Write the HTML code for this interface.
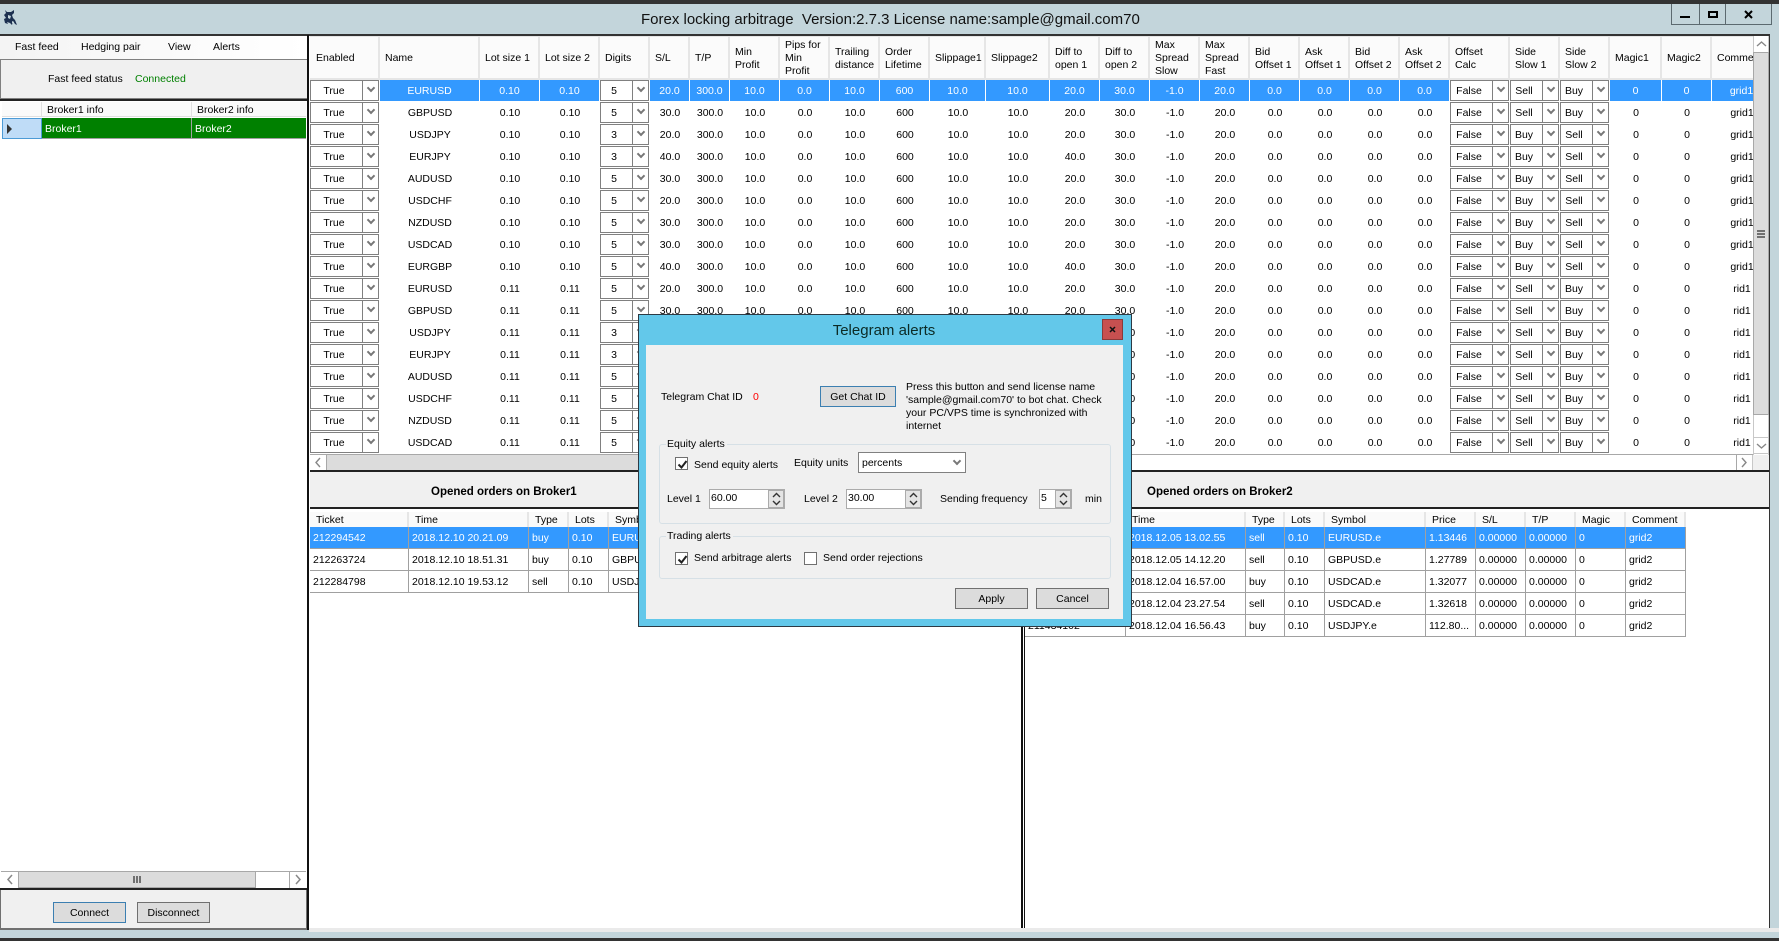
<!DOCTYPE html>
<html><head><meta charset="utf-8"><title>Forex locking arbitrage</title>
<style>
html,body{margin:0;padding:0;width:1779px;height:941px;overflow:hidden;background:#c3d5db}
body{position:relative;font:10.5px/14px "Liberation Sans",sans-serif;color:#000}
div,span,i,b{box-sizing:border-box}
.a{position:absolute}
.t{position:absolute;white-space:pre;line-height:14px}
table{border-collapse:separate;border-spacing:0;table-layout:fixed;position:absolute;left:0;top:0}
td{padding:0;overflow:hidden;white-space:nowrap}
#m{position:absolute;left:310px;top:36px;width:1443px;height:419px;overflow:hidden;background:#fff;border-top:1px solid #e6e6e6}
#m table{width:1462px}
#m tr{height:22px}
#m td{text-align:center;vertical-align:middle;height:22px;box-sizing:border-box}
#m tr.h td{height:42px;background:#fbfbfb;text-align:left;line-height:13px;padding:2px 0 0 5px;border-right:2px solid #e6e6e6;border-bottom:2px solid #e6e6e6}
#m tr.h td:first-child{padding-left:6px}
#m tr.sel td{background:#3399ff;color:#fff;border-right:1px solid #fff;border-bottom:1px solid #fff}
#m td.c,#m tr.sel td.c{padding:0;background:#fff;border:0;color:#000;vertical-align:top}
i{font-style:normal;display:block;position:relative;height:21px;margin-right:1px;border:1px solid #808080;line-height:20px;text-align:center;padding-right:21px;background:#fff}
i::before{content:"";position:absolute;right:15px;top:0;bottom:0;width:1px;background:#808080}
i::after,.dd::after{content:"";position:absolute;box-sizing:border-box;right:4px;top:4px;width:6px;height:6px;border-right:2px solid #777;border-bottom:2px solid #777;transform:rotate(45deg)}
.dd::after{right:5px;top:5px}
.o{position:absolute;background:#fff}
.o tr{height:22px}
.o td{height:22px;box-sizing:border-box;border-right:1px solid #a0a0a0;border-bottom:1px solid #a0a0a0;padding-left:3px;vertical-align:middle}
.o tr.h{height:15px}
.o tr.h td{height:15px;background:#fafafa;border:0;border-right:2px solid #e6e6e6;padding-left:6px;line-height:14px}
.o tr.sel td{background:#3399ff;color:#fff}
.btn{position:absolute;height:21px;background:#dcdcdc;border:1px solid #707070;text-align:center;line-height:20px}
.blue{border-color:#3c7fb1}
.cb{position:absolute;width:13px;height:13px;background:#fff;border:1px solid #707070}
.cb svg{position:absolute;left:1px;top:1px}
.sp{position:absolute;height:20px;background:#fff;border:1px solid #ababab}
.sp b{position:absolute;right:0;top:0;bottom:0;width:16px;background:#ababab}
.sp b span{position:absolute;left:1px;right:1px;height:8px;background:#e4e4e4}
.sp b span svg{position:absolute;left:3px;top:1px}
.g{position:absolute;border:1px solid #d6e0e6;border-radius:3px}
.l{position:absolute;background:#f0f0f0;white-space:nowrap;line-height:14px;padding:0 2px 0 1px}
.sb{position:absolute;background:#fff;border:1px solid #a8a8a8}
</style></head><body>

<!-- window frame -->
<div class="a" style="left:0;top:0;width:1779px;height:4px;background:#333"></div>
<div class="a" style="left:0;top:938px;width:1779px;height:3px;background:#333"></div>
<div class="a" style="left:0;top:34px;width:1770px;height:2px;background:#333"></div>
<svg class="a" style="left:0;top:4px" width="24" height="30" viewBox="0 4 24 30"><path d="M5 10l2 2h4l3-2v3l-2 2 1 3 2 2 2 5-2-1-2-3-1 4-2-2-3-1 1 2-3-1-1-4 2-1-2-3 2-2z" fill="#1c3050"/><path d="M8 15l3 1-1 3-2-1zM12 21l2 1 0 2-2-1z" fill="#c3d5db"/></svg>
<div class="t" id="title" style="left:641px;top:11px;font-size:15px;line-height:17px;width:488px;text-align:center;color:#111">Forex locking arbitrage  Version:2.7.3 License name:sample@gmail.com70</div>
<div class="a" style="left:1671px;top:4px;width:101px;height:21px;border:1px solid #5c6a70;border-top:0"></div>
<div class="a" style="left:1699px;top:4px;width:1px;height:20px;background:#5c6a70"></div>
<div class="a" style="left:1725px;top:4px;width:1px;height:20px;background:#5c6a70"></div>
<div class="a" style="left:1680px;top:16px;width:10px;height:2px;background:#000"></div>
<div class="a" style="left:1708px;top:11px;width:10px;height:7px;border:2px solid #000"></div>
<svg class="a" style="left:1744px;top:10px" width="10" height="9"><path d="M1 1l7 7M8 1l-7 7" stroke="#000" stroke-width="2" fill="none"/></svg>

<!-- left panel -->
<div class="a" style="left:0;top:36px;width:308px;height:894px;background:#fff"></div>
<div class="a" style="left:0;top:36px;width:307px;height:23px;background:linear-gradient(90deg,#f4f4f4,#fbfbfb 60%,#fff)"></div>
<div class="t" style="left:15px;top:40px">Fast feed</div>
<div class="t" style="left:81px;top:40px">Hedging pair</div>
<div class="t" style="left:168px;top:40px">View</div>
<div class="t" style="left:213px;top:40px">Alerts</div>
<div class="a" style="left:0;top:59px;width:307px;height:40px;background:#f0f0f0;border:1px solid #808080;border-right:0"></div>
<div class="t" style="left:48px;top:72px">Fast feed status</div>
<div class="t" style="left:135px;top:72px;color:#008000">Connected</div>
<div class="a" style="left:0;top:99px;width:307px;height:2px;background:#222"></div>
<div class="a" style="left:2px;top:102px;width:304px;height:15px;background:#fafafa;border-bottom:1px solid #e0e0e0"></div>
<div class="a" style="left:41px;top:102px;width:1px;height:15px;background:#e0e0e0"></div>
<div class="a" style="left:191px;top:102px;width:1px;height:15px;background:#e0e0e0"></div>
<div class="t" style="left:47px;top:103px">Broker1 info</div>
<div class="t" style="left:197px;top:103px">Broker2 info</div>
<div class="a" style="left:2px;top:118px;width:40px;height:21px;background:#bfdcf7;border:1px solid #4c9bd6"></div>
<svg class="a" style="left:7px;top:124px" width="6" height="10"><path d="M0 0l5 5-5 5z" fill="#333"/></svg>
<div class="a" style="left:42px;top:118px;width:264px;height:21px;background:#008000;border-bottom:1px solid #a0a0a0"></div>
<div class="a" style="left:191px;top:118px;width:1px;height:21px;background:#a0a0a0"></div>
<div class="t" style="left:45px;top:122px;color:#fff">Broker1</div>
<div class="t" style="left:195px;top:122px;color:#fff">Broker2</div>
<!-- left scrollbar -->
<div class="a" style="left:1px;top:871px;width:305px;height:17px;background:#fff;border-top:1px solid #a8a8a8"></div>
<div class="a" style="left:18px;top:871px;width:238px;height:17px;background:#dcdcdc;border:1px solid #a8a8a8"></div>
<div class="a" style="left:289px;top:871px;width:1px;height:17px;background:#a8a8a8"></div>
<div class="a" style="left:18px;top:871px;width:1px;height:17px;background:#a8a8a8"></div>
<svg class="a" style="left:6px;top:874px" width="8" height="11"><path d="M6 1L2 5.5 6 10" stroke="#888" stroke-width="1.5" fill="none"/></svg>
<svg class="a" style="left:294px;top:874px" width="8" height="11"><path d="M2 1l4 4.5L2 10" stroke="#888" stroke-width="1.5" fill="none"/></svg>
<div class="a" style="left:133px;top:876px;width:8px;height:7px;background:repeating-linear-gradient(90deg,#707070 0 2px,#dcdcdc 2px 3px)"></div>
<div class="a" style="left:0;top:888px;width:307px;height:2px;background:#222"></div>
<div class="a" style="left:0;top:890px;width:307px;height:40px;background:#f0f0f0;border:1px solid #707070;border-top:0;border-width:0 1px 2px 1px"></div>
<div class="btn blue" style="left:53px;top:902px;width:73px">Connect</div>
<div class="btn" style="left:137px;top:902px;width:73px">Disconnect</div>

<!-- right area -->
<div class="a" style="left:310px;top:36px;width:1460px;height:892px;background:#fff"></div>
<div class="a" style="left:307px;top:35px;width:2px;height:895px;background:#111"></div>
<div class="a" style="left:309px;top:36px;width:1px;height:892px;background:#fff"></div>
<div class="a" style="left:309px;top:928px;width:1470px;height:4px;background:#eaeaea"></div>
<div class="a" style="left:1769px;top:35px;width:1px;height:893px;background:#333"></div>

<div id="m"><table>
<colgroup><col style="width:70px"><col style="width:100px"><col style="width:60px"><col style="width:60px"><col style="width:50px"><col style="width:40px"><col style="width:40px"><col style="width:50px"><col style="width:50px"><col style="width:50px"><col style="width:50px"><col style="width:56px"><col style="width:64px"><col style="width:50px"><col style="width:50px"><col style="width:50px"><col style="width:50px"><col style="width:50px"><col style="width:50px"><col style="width:50px"><col style="width:50px"><col style="width:60px"><col style="width:50px"><col style="width:50px"><col style="width:52px"><col style="width:50px"><col style="width:60px"></colgroup>
<tr class="h"><td>Enabled<td>Name<td>Lot size 1<td>Lot size 2<td>Digits<td>S/L<td>T/P<td>Min<br>Profit<td>Pips for<br>Min<br>Profit<td>Trailing<br>distance<td>Order<br>Lifetime<td>Slippage1<td>Slippage2<td>Diff to<br>open 1<td>Diff to<br>open 2<td>Max<br>Spread<br>Slow<td>Max<br>Spread<br>Fast<td>Bid<br>Offset 1<td>Ask<br>Offset 1<td>Bid<br>Offset 2<td>Ask<br>Offset 2<td>Offset<br>Calc<td>Side<br>Slow 1<td>Side<br>Slow 2<td>Magic1<td>Magic2<td>Comment
<tr class="sel"><td class=c><i>True</i><td>EURUSD<td>0.10<td>0.10<td class=c><i>5</i><td>20.0<td>300.0<td>10.0<td>0.0<td>10.0<td>600<td>10.0<td>10.0<td>20.0<td>30.0<td>-1.0<td>20.0<td>0.0<td>0.0<td>0.0<td>0.0<td class=c><i>False</i><td class=c><i>Sell</i><td class=c><i>Buy</i><td>0<td>0<td>grid1
<tr><td class=c><i>True</i><td>GBPUSD<td>0.10<td>0.10<td class=c><i>5</i><td>30.0<td>300.0<td>10.0<td>0.0<td>10.0<td>600<td>10.0<td>10.0<td>20.0<td>30.0<td>-1.0<td>20.0<td>0.0<td>0.0<td>0.0<td>0.0<td class=c><i>False</i><td class=c><i>Sell</i><td class=c><i>Buy</i><td>0<td>0<td>grid1
<tr><td class=c><i>True</i><td>USDJPY<td>0.10<td>0.10<td class=c><i>3</i><td>20.0<td>300.0<td>10.0<td>0.0<td>10.0<td>600<td>10.0<td>10.0<td>20.0<td>30.0<td>-1.0<td>20.0<td>0.0<td>0.0<td>0.0<td>0.0<td class=c><i>False</i><td class=c><i>Buy</i><td class=c><i>Sell</i><td>0<td>0<td>grid1
<tr><td class=c><i>True</i><td>EURJPY<td>0.10<td>0.10<td class=c><i>3</i><td>40.0<td>300.0<td>10.0<td>0.0<td>10.0<td>600<td>10.0<td>10.0<td>40.0<td>30.0<td>-1.0<td>20.0<td>0.0<td>0.0<td>0.0<td>0.0<td class=c><i>False</i><td class=c><i>Buy</i><td class=c><i>Sell</i><td>0<td>0<td>grid1
<tr><td class=c><i>True</i><td>AUDUSD<td>0.10<td>0.10<td class=c><i>5</i><td>30.0<td>300.0<td>10.0<td>0.0<td>10.0<td>600<td>10.0<td>10.0<td>20.0<td>30.0<td>-1.0<td>20.0<td>0.0<td>0.0<td>0.0<td>0.0<td class=c><i>False</i><td class=c><i>Buy</i><td class=c><i>Sell</i><td>0<td>0<td>grid1
<tr><td class=c><i>True</i><td>USDCHF<td>0.10<td>0.10<td class=c><i>5</i><td>20.0<td>300.0<td>10.0<td>0.0<td>10.0<td>600<td>10.0<td>10.0<td>20.0<td>30.0<td>-1.0<td>20.0<td>0.0<td>0.0<td>0.0<td>0.0<td class=c><i>False</i><td class=c><i>Buy</i><td class=c><i>Sell</i><td>0<td>0<td>grid1
<tr><td class=c><i>True</i><td>NZDUSD<td>0.10<td>0.10<td class=c><i>5</i><td>30.0<td>300.0<td>10.0<td>0.0<td>10.0<td>600<td>10.0<td>10.0<td>20.0<td>30.0<td>-1.0<td>20.0<td>0.0<td>0.0<td>0.0<td>0.0<td class=c><i>False</i><td class=c><i>Buy</i><td class=c><i>Sell</i><td>0<td>0<td>grid1
<tr><td class=c><i>True</i><td>USDCAD<td>0.10<td>0.10<td class=c><i>5</i><td>30.0<td>300.0<td>10.0<td>0.0<td>10.0<td>600<td>10.0<td>10.0<td>20.0<td>30.0<td>-1.0<td>20.0<td>0.0<td>0.0<td>0.0<td>0.0<td class=c><i>False</i><td class=c><i>Buy</i><td class=c><i>Sell</i><td>0<td>0<td>grid1
<tr><td class=c><i>True</i><td>EURGBP<td>0.10<td>0.10<td class=c><i>5</i><td>40.0<td>300.0<td>10.0<td>0.0<td>10.0<td>600<td>10.0<td>10.0<td>40.0<td>30.0<td>-1.0<td>20.0<td>0.0<td>0.0<td>0.0<td>0.0<td class=c><i>False</i><td class=c><i>Buy</i><td class=c><i>Sell</i><td>0<td>0<td>grid1
<tr><td class=c><i>True</i><td>EURUSD<td>0.11<td>0.11<td class=c><i>5</i><td>20.0<td>300.0<td>10.0<td>0.0<td>10.0<td>600<td>10.0<td>10.0<td>20.0<td>30.0<td>-1.0<td>20.0<td>0.0<td>0.0<td>0.0<td>0.0<td class=c><i>False</i><td class=c><i>Sell</i><td class=c><i>Buy</i><td>0<td>0<td>rid1
<tr><td class=c><i>True</i><td>GBPUSD<td>0.11<td>0.11<td class=c><i>5</i><td>30.0<td>300.0<td>10.0<td>0.0<td>10.0<td>600<td>10.0<td>10.0<td>20.0<td>30.0<td>-1.0<td>20.0<td>0.0<td>0.0<td>0.0<td>0.0<td class=c><i>False</i><td class=c><i>Sell</i><td class=c><i>Buy</i><td>0<td>0<td>rid1
<tr><td class=c><i>True</i><td>USDJPY<td>0.11<td>0.11<td class=c><i>3</i><td>20.0<td>300.0<td>10.0<td>0.0<td>10.0<td>600<td>10.0<td>10.0<td>20.0<td>30.0<td>-1.0<td>20.0<td>0.0<td>0.0<td>0.0<td>0.0<td class=c><i>False</i><td class=c><i>Sell</i><td class=c><i>Buy</i><td>0<td>0<td>rid1
<tr><td class=c><i>True</i><td>EURJPY<td>0.11<td>0.11<td class=c><i>3</i><td>40.0<td>300.0<td>10.0<td>0.0<td>10.0<td>600<td>10.0<td>10.0<td>40.0<td>30.0<td>-1.0<td>20.0<td>0.0<td>0.0<td>0.0<td>0.0<td class=c><i>False</i><td class=c><i>Sell</i><td class=c><i>Buy</i><td>0<td>0<td>rid1
<tr><td class=c><i>True</i><td>AUDUSD<td>0.11<td>0.11<td class=c><i>5</i><td>30.0<td>300.0<td>10.0<td>0.0<td>10.0<td>600<td>10.0<td>10.0<td>20.0<td>30.0<td>-1.0<td>20.0<td>0.0<td>0.0<td>0.0<td>0.0<td class=c><i>False</i><td class=c><i>Sell</i><td class=c><i>Buy</i><td>0<td>0<td>rid1
<tr><td class=c><i>True</i><td>USDCHF<td>0.11<td>0.11<td class=c><i>5</i><td>20.0<td>300.0<td>10.0<td>0.0<td>10.0<td>600<td>10.0<td>10.0<td>20.0<td>30.0<td>-1.0<td>20.0<td>0.0<td>0.0<td>0.0<td>0.0<td class=c><i>False</i><td class=c><i>Sell</i><td class=c><i>Buy</i><td>0<td>0<td>rid1
<tr><td class=c><i>True</i><td>NZDUSD<td>0.11<td>0.11<td class=c><i>5</i><td>30.0<td>300.0<td>10.0<td>0.0<td>10.0<td>600<td>10.0<td>10.0<td>20.0<td>30.0<td>-1.0<td>20.0<td>0.0<td>0.0<td>0.0<td>0.0<td class=c><i>False</i><td class=c><i>Sell</i><td class=c><i>Buy</i><td>0<td>0<td>rid1
<tr><td class=c><i>True</i><td>USDCAD<td>0.11<td>0.11<td class=c><i>5</i><td>30.0<td>300.0<td>10.0<td>0.0<td>10.0<td>600<td>10.0<td>10.0<td>20.0<td>30.0<td>-1.0<td>20.0<td>0.0<td>0.0<td>0.0<td>0.0<td class=c><i>False</i><td class=c><i>Sell</i><td class=c><i>Buy</i><td>0<td>0<td>rid1
</table></div>
<div class="a" style="left:310px;top:454px;width:1443px;height:1px;background:#a8a8a8"></div>

<!-- main vertical scrollbar -->
<div class="a" style="left:1753px;top:36px;width:16px;height:419px;background:#fff;border:1px solid #c8c8c8;border-width:0 1px 0 1px"></div>
<div class="a" style="left:1753px;top:52px;width:16px;height:363px;background:#dcdcdc;border:1px solid #a8a8a8"></div>
<div class="a" style="left:1757px;top:230px;width:8px;height:8px;background:repeating-linear-gradient(180deg,#707070 0 2px,#dcdcdc 2px 3px)"></div>
<svg class="a" style="left:1756px;top:40px" width="11" height="8"><path d="M1 6l4.5-4L10 6" stroke="#888" stroke-width="1.4" fill="none"/></svg>
<div class="a" style="left:1753px;top:437px;width:16px;height:17px;border:1px solid #c8c8c8"></div>
<svg class="a" style="left:1756px;top:442px" width="11" height="8"><path d="M1 2l4.5 4L10 2" stroke="#888" stroke-width="1.4" fill="none"/></svg>
<!-- main horizontal scrollbar -->
<div class="a" style="left:310px;top:455px;width:1442px;height:15px;background:#fff"></div>
<div class="a" style="left:326px;top:455px;width:500px;height:15px;background:#dcdcdc;border:1px solid #a8a8a8;border-top:0;border-bottom:0"></div>
<svg class="a" style="left:314px;top:457px" width="8" height="11"><path d="M6 1L2 5.5 6 10" stroke="#888" stroke-width="1.4" fill="none"/></svg>
<div class="a" style="left:1736px;top:455px;width:1px;height:15px;background:#a8a8a8"></div>
<div class="a" style="left:1752px;top:455px;width:1px;height:15px;background:#c8c8c8"></div>
<svg class="a" style="left:1740px;top:457px" width="8" height="11"><path d="M2 1l4 4.5L2 10" stroke="#888" stroke-width="1.4" fill="none"/></svg>
<div class="a" style="left:1753px;top:455px;width:16px;height:15px;background:#f0f0f0"></div>
<div class="a" style="left:310px;top:470px;width:1459px;height:2px;background:#222"></div>
<div class="a" style="left:310px;top:472px;width:1459px;height:35px;background:#f0f0f0"></div>
<div class="a" style="left:310px;top:507px;width:1459px;height:2px;background:#222"></div>
<div class="t" style="left:431px;top:485px;font-weight:bold;font-size:11.5px">Opened orders on Broker1</div>
<div class="t" style="left:1147px;top:485px;font-weight:bold;font-size:11.5px">Opened orders on Broker2</div>

<!-- orders left -->
<table class="o" style="left:310px;top:512px;width:379px">
<colgroup><col style="width:99px"><col style="width:120px"><col style="width:40px"><col style="width:40px"><col style="width:80px"></colgroup>
<tr class="h"><td>Ticket<td>Time<td>Type<td>Lots<td>Symbol
<tr class="sel"><td>212294542<td>2018.12.10 20.21.09<td>buy<td>0.10<td>EURUSD.e
<tr><td>212263724<td>2018.12.10 18.51.31<td>buy<td>0.10<td>GBPUSD.e
<tr><td>212284798<td>2018.12.10 19.53.12<td>sell<td>0.10<td>USDJPY.e
</table>
<div class="a" style="left:1021px;top:509px;width:2px;height:419px;background:#111"></div>
<div class="a" style="left:1024px;top:509px;width:1px;height:419px;background:#111"></div>
<!-- orders right -->
<table class="o" style="left:1025px;top:512px;width:661px">
<colgroup><col style="width:101px"><col style="width:120px"><col style="width:39px"><col style="width:40px"><col style="width:101px"><col style="width:50px"><col style="width:50px"><col style="width:50px"><col style="width:50px"><col style="width:60px"></colgroup>
<tr class="h"><td>Ticket<td>Time<td>Type<td>Lots<td>Symbol<td>Price<td>S/L<td>T/P<td>Magic<td>Comment
<tr class="sel"><td><td>2018.12.05 13.02.55<td>sell<td>0.10<td>EURUSD.e<td>1.13446<td>0.00000<td>0.00000<td>0<td>grid2
<tr><td><td>2018.12.05 14.12.20<td>sell<td>0.10<td>GBPUSD.e<td>1.27789<td>0.00000<td>0.00000<td>0<td>grid2
<tr><td><td>2018.12.04 16.57.00<td>buy<td>0.10<td>USDCAD.e<td>1.32077<td>0.00000<td>0.00000<td>0<td>grid2
<tr><td><td>2018.12.04 23.27.54<td>sell<td>0.10<td>USDCAD.e<td>1.32618<td>0.00000<td>0.00000<td>0<td>grid2
<tr><td>211434102<td>2018.12.04 16.56.43<td>buy<td>0.10<td>USDJPY.e<td>112.80...<td>0.00000<td>0.00000<td>0<td>grid2
</table>

<!-- dialog -->
<div class="a" style="left:638px;top:314px;width:494px;height:313px;background:#63c8ea;border:1px solid #2d3a44"></div>
<div class="a" style="left:646px;top:345px;width:477px;height:274px;background:#f0f0f0"></div>
<div class="t" style="left:780px;top:322px;width:208px;text-align:center;font-size:15px;line-height:18px;color:#0c2b26">Telegram alerts</div>
<div class="a" style="left:1102px;top:319px;width:21px;height:21px;background:#c75050;border:1px solid #8a3a3a"></div>
<svg class="a" style="left:1109px;top:326px" width="7" height="7"><path d="M1 1l5 5M6 1l-5 5" stroke="#111" stroke-width="1.5" fill="none"/></svg>

<div class="t" style="left:661px;top:390px">Telegram Chat ID</div>
<div class="t" style="left:753px;top:390px;color:#f00">0</div>
<div class="btn blue" style="left:820px;top:386px;width:76px">Get Chat ID</div>
<div class="t" style="left:906px;top:381px;line-height:13px">Press this button and send license name
'sample@gmail.com70' to bot chat. Check
your PC/VPS time is synchronized with
internet</div>

<div class="g" style="left:659px;top:444px;width:452px;height:80px"></div>
<div class="l" style="left:666px;top:437px">Equity alerts</div>
<div class="cb" style="left:675px;top:457px"><svg width="11" height="11"><path d="M1.5 5.5l3 3L9.5 2" stroke="#222" stroke-width="2" fill="none"/></svg></div>
<div class="t" style="left:694px;top:458px">Send equity alerts</div>
<div class="t" style="left:794px;top:456px">Equity units</div>
<div class="a dd" style="left:858px;top:452px;width:108px;height:21px;background:#fff;border:1px solid #808080;line-height:20px;padding-left:3px">percents</div>
<div class="t" style="left:667px;top:492px">Level 1</div>
<div class="sp" style="left:709px;top:489px;width:76px"><b><span style="top:1px"><svg width="9" height="6"><path d="M1 5l3.5-3.5L8 5" stroke="#333" stroke-width="1.4" fill="none"/></svg></span><span style="bottom:1px"><svg width="9" height="6"><path d="M1 1l3.5 3.5L8 1" stroke="#333" stroke-width="1.4" fill="none"/></svg></span></b><div class="t" style="left:1px;top:1px">60.00</div></div>
<div class="t" style="left:804px;top:492px">Level 2</div>
<div class="sp" style="left:846px;top:489px;width:76px"><b><span style="top:1px"><svg width="9" height="6"><path d="M1 5l3.5-3.5L8 5" stroke="#333" stroke-width="1.4" fill="none"/></svg></span><span style="bottom:1px"><svg width="9" height="6"><path d="M1 1l3.5 3.5L8 1" stroke="#333" stroke-width="1.4" fill="none"/></svg></span></b><div class="t" style="left:1px;top:1px">30.00</div></div>
<div class="t" style="left:940px;top:492px">Sending frequency</div>
<div class="sp" style="left:1039px;top:489px;width:33px"><b><span style="top:1px"><svg width="9" height="6"><path d="M1 5l3.5-3.5L8 5" stroke="#333" stroke-width="1.4" fill="none"/></svg></span><span style="bottom:1px"><svg width="9" height="6"><path d="M1 1l3.5 3.5L8 1" stroke="#333" stroke-width="1.4" fill="none"/></svg></span></b><div class="t" style="left:1px;top:1px">5</div></div>
<div class="t" style="left:1085px;top:492px">min</div>

<div class="g" style="left:659px;top:536px;width:452px;height:43px"></div>
<div class="l" style="left:666px;top:529px">Trading alerts</div>
<div class="cb" style="left:675px;top:552px"><svg width="11" height="11"><path d="M1.5 5.5l3 3L9.5 2" stroke="#222" stroke-width="2" fill="none"/></svg></div>
<div class="t" style="left:694px;top:551px">Send arbitrage alerts</div>
<div class="cb" style="left:804px;top:552px"></div>
<div class="t" style="left:823px;top:551px">Send order rejections</div>

<div class="btn" style="left:955px;top:588px;width:73px">Apply</div>
<div class="btn" style="left:1036px;top:588px;width:73px">Cancel</div>
</body></html>
